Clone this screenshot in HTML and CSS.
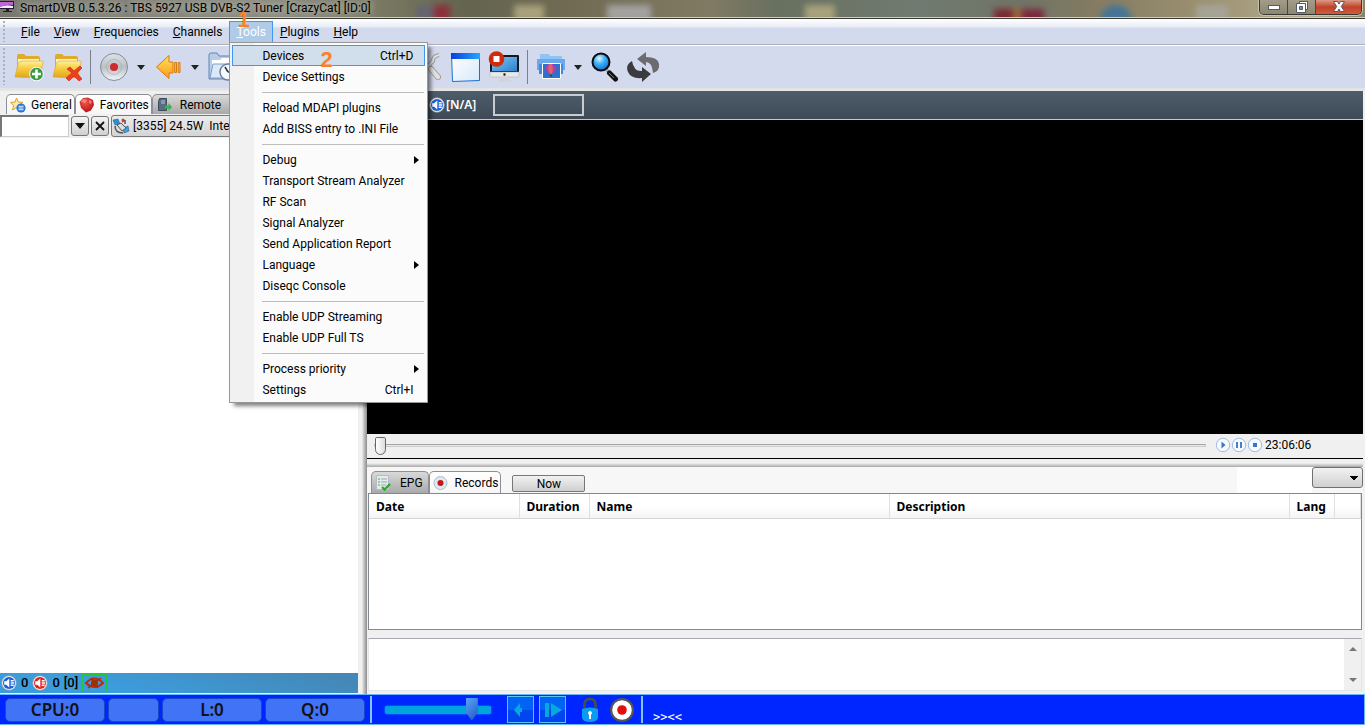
FILE: index.html
```html
<!DOCTYPE html>
<html lang="en">
<head>
<meta charset="utf-8">
<title>SmartDVB</title>
<link rel="stylesheet" href="styles.css">
</head>
<body>
<svg class="defs" width="0" height="0" aria-hidden="true">
  <defs>
    <linearGradient id="gold" x1="0" y1="0" x2="0" y2="1"><stop offset="0" stop-color="#fff0a0"/><stop offset=".4" stop-color="#f8cf45"/><stop offset="1" stop-color="#e2a21a"/></linearGradient>
    <linearGradient id="orange" x1="0" y1="0" x2="0" y2="1"><stop offset="0" stop-color="#ffe05a"/><stop offset="1" stop-color="#ff9a1c"/></linearGradient>
    <linearGradient id="silver" x1="0" y1="0" x2="0" y2="1"><stop offset="0" stop-color="#dfe3e6"/><stop offset=".5" stop-color="#b9c0c6"/><stop offset="1" stop-color="#f4f6f8"/></linearGradient>
    <linearGradient id="screen" x1="0" y1="0" x2="1" y2="1"><stop offset="0" stop-color="#7cc8f4"/><stop offset="1" stop-color="#2f7fcb"/></linearGradient>
    <linearGradient id="bluebar" x1="0" y1="0" x2="1" y2="0"><stop offset="0" stop-color="#0a3ce0"/><stop offset="1" stop-color="#1fa8ff"/></linearGradient>
    <linearGradient id="page" x1="0" y1="0" x2="1" y2="1"><stop offset="0" stop-color="#fff"/><stop offset="1" stop-color="#d8e8fb"/></linearGradient>
    <radialGradient id="lens" cx=".4" cy=".3" r=".8"><stop offset="0" stop-color="#e0f6ff"/><stop offset=".4" stop-color="#3eb1f5"/><stop offset="1" stop-color="#0560c8"/></radialGradient>
    <radialGradient id="red" cx=".4" cy=".3" r=".8"><stop offset="0" stop-color="#f0584e"/><stop offset="1" stop-color="#b00a10"/></radialGradient>
    <symbol id="folder" viewBox="0 0 30 30"><path d="M3 24V4q0-2 2-2h5l2 2h12q2 0 2 2v18z" fill="#e0ab2a"/><path d="M4 7h21v5H4z" fill="#fff3bd"/><path d="M1 25 4 12q1-3 4-3h20q2 0 1 2l-3 13q-1 2-3 2z" fill="url(#gold)" stroke="#d9a528" stroke-width=".6"/></symbol>
    <symbol id="speaker" viewBox="0 0 16 16"><circle cx="8" cy="8" r="7.300" fill="#f4f4f4" stroke="#999" stroke-width=".7"/><circle cx="8" cy="8" r="6" fill="currentColor"/><path d="M3.200 6.300h2L8.300 3.500v9L5.200 9.700h-2zM9.700 5h3v1.400h-3zM9.700 7.300h3.500v1.400H9.700zM9.700 9.600h3V11h-3z" fill="#fff"/></symbol>
  </defs>
</svg>

<div class="window">
  <header class="titlebar">
    <div class="backdrop" aria-hidden="true"><i class="b1"></i><i class="b2"></i><i class="b3"></i><i class="b4"></i><i class="b5"></i><i class="b6"></i><i class="b7"></i><i class="b8"></i></div>
    <svg class="app-icon" width="16" height="16" viewBox="0 0 16 16"><path d="M0 1h14v8H0z" fill="#241b38"/><path d="M0 2h13v3Q7 4 0 7z" fill="#c264dc"/><path d="M0 7q6-3 13-1v2H0z" fill="#eee"/><path d="M6 9h3v2h3v1H3v-1h3z" fill="#222"/></svg>
    <h1 class="title">SmartDVB 0.5.3.26 : TBS 5927 USB DVB-S2 Tuner [CrazyCat] [ID:0]</h1>
    <div class="window-buttons">
      <button class="wb" aria-label="Minimize"><svg width="14" height="14" viewBox="0 0 14 14"><rect x="1.500" y="5.500" width="11" height="4" fill="#fff" stroke="#555a68"/></svg></button>
      <button class="wb" aria-label="Restore"><svg width="14" height="14" viewBox="0 0 14 14"><path d="M4.500 1.500h8v8h-2v-6h-6z" fill="#fff" stroke="#555a68"/><path d="M1.500 3.500h9v9h-9zM4.500 6.500v3h3v-3z" fill="#fff" fill-rule="evenodd" stroke="#555a68"/></svg></button>
      <button class="wb wb-close" aria-label="Close"><svg width="14" height="14" viewBox="0 0 14 14"><path d="M1.500 1.500h4L7 4l1.500-2.500h4L9.300 6.500l3.200 5h-4L7 9l-1.500 2.500h-4l3.200-5z" fill="#fff" stroke="#555a68"/></svg></button>
    </div>
  </header>

  <nav class="menubar">
    <button class="mb"><u>F</u>ile</button>
    <button class="mb"><u>V</u>iew</button>
    <button class="mb"><u>F</u>requencies</button>
    <button class="mb"><u>C</u>hannels</button>
    <div class="mb-host">
      <button class="mb mb-open" aria-expanded="true"><u>T</u>ools</button>
      <span class="callout callout-one">1</span>
      <div class="menu" role="menu">
        <button class="mi mi-hot" role="menuitem"><span>Devices</span><span>Ctrl+D</span></button>
        <button class="mi" role="menuitem">Device Settings</button>
        <hr class="ms">
        <button class="mi" role="menuitem">Reload MDAPI plugins</button>
        <button class="mi" role="menuitem">Add BISS entry to .INI File</button>
        <hr class="ms">
        <button class="mi mi-sub" role="menuitem">Debug</button>
        <button class="mi" role="menuitem">Transport Stream Analyzer</button>
        <button class="mi" role="menuitem">RF Scan</button>
        <button class="mi" role="menuitem">Signal Analyzer</button>
        <button class="mi" role="menuitem">Send Application Report</button>
        <button class="mi mi-sub" role="menuitem">Language</button>
        <button class="mi" role="menuitem">Diseqc Console</button>
        <hr class="ms">
        <button class="mi" role="menuitem">Enable UDP Streaming</button>
        <button class="mi" role="menuitem">Enable UDP Full TS</button>
        <hr class="ms">
        <button class="mi mi-sub" role="menuitem">Process priority</button>
        <button class="mi" role="menuitem"><span>Settings</span><span>Ctrl+I</span></button>
        <span class="callout callout-two">2</span>
      </div>
    </div>
    <button class="mb"><u>P</u>lugins</button>
    <button class="mb"><u>H</u>elp</button>
  </nav>

  <div class="toolbar" role="toolbar">
    <button class="tb" aria-label="Add folder"><svg width="30" height="30" viewBox="0 0 30 30"><use href="#folder"/><circle cx="22.500" cy="22" r="6.800" fill="#3a9a43" stroke="#fff"/><path d="M22.500 17.500v9M18 22h9" stroke="#fff" stroke-width="2.600"/></svg></button>
    <button class="tb" aria-label="Delete folder"><svg width="30" height="30" viewBox="0 0 30 30"><use href="#folder"/><path d="M15 17l3-2 4 4 6-5 2 2-5 5 5 6-3 2-5-5-5 5-3-3 6-5z" fill="#ee3f22" stroke="#cf2c14" stroke-width=".7"/></svg></button>
    <span class="tsep"></span>
    <button class="tb" aria-label="Record"><svg width="30" height="30" viewBox="0 0 30 30"><circle cx="15" cy="15" r="13.500" fill="url(#silver)" stroke="#858c92"/><circle cx="15" cy="15" r="7.500" fill="none" stroke="#a4abb1" opacity=".6"/><circle cx="15" cy="15" r="4" fill="#d12c2c"/></svg></button>
    <button class="tb tb-drop" aria-label="Record options"><svg width="8" height="5" viewBox="0 0 8 5"><path d="M0 0h8L4 5z" fill="#222"/></svg></button>
    <button class="tb" aria-label="Back"><svg width="28" height="28" viewBox="0 0 28 28"><path d="M2.500 14 15 2.500V9h4v11h-4v5.500zM20.700 9.500h1.800v10h-1.800zM24.200 9.500H26v10h-1.800z" fill="url(#orange)" stroke="#d77a10"/></svg></button>
    <button class="tb tb-drop" aria-label="Back options"><svg width="8" height="5" viewBox="0 0 8 5"><path d="M0 0h8L4 5z" fill="#222"/></svg></button>
    <button class="tb" aria-label="Schedule"><svg width="30" height="30" viewBox="0 0 30 30"><path d="M2 27V3q0-2 2-2h6l2 3h14v23z" fill="#b7cde9" stroke="#6484b3"/><path d="M5 8h8l2-2h9v8H5z" fill="#fff"/><path d="M3 26 6 12h23l-3 14z" fill="#dce9f8" stroke="#7f9cc6"/><circle cx="21" cy="20" r="8" fill="#f5faff" stroke="#6c7f9b" stroke-width="1.500"/><path d="M21 20l-3-5M21 20h4" stroke="#24364f" stroke-width="1.500"/></svg></button>
    <span class="tgap"></span>
    <button class="tb" aria-label="Tools"><svg width="30" height="30" viewBox="0 0 30 30"><path d="M5 4 22 22M26 3q-6 1-6 6L8 22q-4 1-4 5" fill="none" stroke="#999" stroke-width="4"/><path d="M5 4 22 22M26 3q-6 1-6 6L8 22" fill="none" stroke="#e2e2e2" stroke-width="2.200"/><path d="M18 17l7 8" stroke="#999" stroke-width="6" stroke-linecap="round"/><path d="M18 17l7 8" stroke="#e0e0de" stroke-width="4.400" stroke-linecap="round"/></svg></button>
    <button class="tb" aria-label="Window"><svg width="32" height="32" viewBox="0 0 32 32"><path d="M1.500 2.500h28v27l-27 1z" fill="url(#page)" stroke="#1d6fd2"/><path d="M1 2h29v6H1z" fill="url(#bluebar)"/></svg></button>
    <button class="tb" aria-label="Stop display"><svg width="32" height="32" viewBox="0 0 32 32"><path d="M2 5q0-1 1-1h27q1 0 1 1v17H2z" fill="#161a20"/><path d="M4 6h25v14H4z" fill="url(#screen)"/><path d="M2 21h29v4q0 1-1 1H3q-1 0-1-1z" fill="#e6e8eb" stroke="#aaa" stroke-width=".5"/><circle cx="16.500" cy="23.500" r="1.200" fill="#222"/><path d="M13 26h7l1 3h2v2H10v-2h2z" fill="#d2d5d9"/><circle cx="8.500" cy="8" r="7.800" fill="#d22b0c"/><path d="M5.500 5h6v6h-6z" fill="#fff"/></svg></button>
    <span class="tsep"></span>
    <button class="tb" aria-label="Snapshot"><svg width="30" height="30" viewBox="0 0 30 30"><path d="M4 2h9l1 2h12v8H4z" fill="#8fc4f6"/><path d="M1 7h28v11H1z" fill="#6aa9ec"/><path d="M3 12h24v10H3z" fill="#4388db"/><path d="M6.500 11.500h18v15h-18z" fill="#2d70ce" stroke="#fff"/><path d="M9.500 16q0-4 5-4t6 4q0 3-4.500 6h-2q-4.500-3-4.500-6z" fill="#b040a8"/><path d="M13 12h3l1 5-1 5h-2l-2-5z" fill="#e2606a"/><path d="M14 22.500h2v2h-2z" fill="#443"/></svg></button>
    <button class="tb tb-drop" aria-label="Snapshot options"><svg width="8" height="5" viewBox="0 0 8 5"><path d="M0 0h8L4 5z" fill="#222"/></svg></button>
    <button class="tb" aria-label="Search"><svg width="30" height="30" viewBox="0 0 30 30"><path d="m16 17 3.500 4" stroke="#aaa" stroke-width="3"/><path d="m19.500 21 6 6" stroke="#111" stroke-width="5" stroke-linecap="round"/><path d="m19 21 5 5" stroke="#777"/><circle cx="11" cy="10" r="8.500" fill="url(#lens)" stroke="#0b0d10" stroke-width="2"/></svg></button>
    <button class="tb" aria-label="Refresh"><svg width="34" height="32" viewBox="0 0 34 32"><path d="M6 10Q-1 14 2 21t14 6v4l9-8-9-7v4Q8 21 6 10z" fill="#3b3b3f"/><path d="M27 22q7-2 6-9T20 6V1l-9 7 9 7v-4q6 0 7 11z" fill="#6b6b70"/></svg></button>
  </div>

  <div class="main">
    <aside class="left">
      <div class="tabs" role="tablist">
        <button class="tab tab-lit" role="tab"><svg width="16" height="16" viewBox="0 0 16 16"><path d="m6.500 1 1.800 4 4.500.4-3.300 3 1 4.400-4-2.300L2.600 13l1-4.600L.5 5.400 5 5z" fill="#fde9a6" stroke="#dda02c"/><circle cx="11" cy="11" r="4.600" fill="#2675d8"/><path d="M8.500 9.300h5M8.500 11h5M8.500 12.700h5" stroke="#fff" stroke-width=".9"/></svg>General</button>
        <button class="tab tab-lit" role="tab"><svg width="16" height="16" viewBox="0 0 16 16"><path d="m4 1 5-.5 5 2.500 1 5-3 5.500L7 15.500 2 11 .5 5z" fill="url(#red)"/><path d="m4 2 4 1-2 3-4-1zM10 3l3 1-1 3-2-1z" fill="#ff9990" opacity=".7"/></svg>Favorites</button>
        <button class="tab tab-on" role="tab" aria-selected="true"><svg width="16" height="16" viewBox="0 0 16 16"><path d="M2.500 1.500h7v12h-8v-9z" fill="#586d82" stroke="#3d4c5b"/><path d="M4 4h4M4 6h4" stroke="#b7c5d2"/><path d="M8 8.500h3.500V6L15 10l-3.500 4v-2.500H8z" fill="#35b44a"/></svg>Remote</button>
      </div>
      <div class="filter">
        <input class="filter-box" type="text" aria-label="Filter">
        <button class="sq" aria-label="Show list"><svg width="10" height="6" viewBox="0 0 10 6"><path d="M0 0h10L5 6z" fill="#111"/></svg></button>
        <button class="sq" aria-label="Clear"><svg width="10" height="10" viewBox="0 0 10 10"><path d="m1 1 8 8M9 1 1 9" stroke="#111" stroke-width="1.800"/></svg></button>
        <button class="sat"><svg width="18" height="18" viewBox="0 0 18 18"><path d="m1 3 5-1 2 5-5 1z" fill="#2e8ed2" stroke="#215f92" stroke-width=".6"/><path d="m11 11 5-2 1 5-5 2z" fill="#3aa0e0" stroke="#215f92" stroke-width=".6"/><path d="m5 8 4-2 5 5-4 3z" fill="#ddd" stroke="#555"/><path d="M3 9q0 7 8 7M10 5l3-2M13 3v4" fill="none" stroke="#555" stroke-width="1.500"/><circle cx="11" cy="3" r="1.500" fill="#d64036"/></svg>[3355] 24.5W&nbsp; Intelsat</button>
      </div>
      <div class="tree"></div>
      <div class="status">
        <svg class="ico-blue" width="16" height="16"><use href="#speaker"/></svg><span>0</span>
        <svg class="ico-red" width="16" height="16"><use href="#speaker"/></svg><span>0</span><span>[0]</span>
        <svg width="25" height="18" viewBox="0 0 25 18"><path d="M.5.500h24v17H.5z" stroke="#1ec43c" fill="none"/><path d="M4 9q8.500-9 17 0-8.500 8-17 0z" fill="none" stroke="#c92604" stroke-width="2"/><circle cx="12.500" cy="9" r="3.500" fill="#8e3a05"/><path d="m6 14 13-10M9 4l7 10" stroke="#a72a04" stroke-width="1.500"/></svg>
      </div>
    </aside>
    <div class="splitter"></div>
    <section class="right">
      <div class="info"><svg class="ico-blue" width="16" height="16"><use href="#speaker"/></svg><b>[N/A]</b><span class="info-box"></span></div>
      <div class="video"></div>
      <div class="seek">
        <input class="seek-range" type="range" min="0" max="100" value="0" aria-label="Position">
        <button class="rb" aria-label="Play"><svg width="16" height="16" viewBox="0 0 16 16"><circle cx="8" cy="8" r="6.700" fill="#f7faff" stroke="#9dbbe4"/><path d="m6.500 4.500 4 3.500-4 3.500z" fill="#3d75c2"/></svg></button>
        <button class="rb" aria-label="Pause"><svg width="16" height="16" viewBox="0 0 16 16"><circle cx="8" cy="8" r="6.700" fill="#f7faff" stroke="#9dbbe4"/><path d="M5 5h2v6H5zM9 5h2v6H9z" fill="#4b80c9"/></svg></button>
        <button class="rb" aria-label="Stop"><svg width="16" height="16" viewBox="0 0 16 16"><circle cx="8" cy="8" r="6.700" fill="#f7faff" stroke="#9dbbe4"/><path d="M6 6h4v4H6z" fill="#3d75c2"/></svg></button>
        <time class="clock">23:06:06</time>
      </div>
      <div class="hsplit"></div>
      <div class="epg-head">
        <div class="tabs" role="tablist">
          <button class="tab tab-on" role="tab" aria-selected="true"><svg width="16" height="16" viewBox="0 0 16 16"><path d="M1.500.5h12v14h-12z" fill="#e5eaef" stroke="#b4bcc4"/><path d="M3 4h2M3 7h2M3 10h2" stroke="#57a94c"/><path d="M6 4h6M6 7h6M6 10h5" stroke="#9aa7b4"/><path d="m7 12 2.500 2.500L15 9" fill="none" stroke="#31a836" stroke-width="2.400"/></svg>EPG</button>
          <button class="tab tab-lit" role="tab"><svg width="16" height="16" viewBox="0 0 16 16"><circle cx="7.500" cy="8" r="6.500" fill="#dce9f2" stroke="#aebdc8"/><circle cx="7.500" cy="8" r="3" fill="#c81414"/></svg>Records</button>
        </div>
        <button class="now">Now</button>
        <span class="blank"></span>
        <select class="drop" aria-label="Language"><option></option></select>
      </div>
      <div class="grid">
        <table class="epg">
          <thead><tr><th class="c-date">Date</th><th class="c-dur">Duration</th><th class="c-name">Name</th><th class="c-desc">Description</th><th class="c-lang">Lang</th><th></th></tr></thead>
        </table>
      </div>
      <div class="memo">
        <textarea class="memo-text" aria-label="Event details" readonly></textarea>
        <div class="scroll" aria-hidden="true"><svg width="8" height="4" viewBox="0 0 8 4"><path d="M0 4h8L4 0z" fill="#777"/></svg><svg width="8" height="4" viewBox="0 0 8 4"><path d="M0 0h8L4 4z" fill="#777"/></svg></div>
      </div>
    </section>
  </div>

  <footer class="bottom">
    <output class="pill">CPU:0</output><output class="pill pill-s"></output><output class="pill">L:0</output><output class="pill">Q:0</output>
    <span class="bsep"></span>
    <input class="volume" type="range" min="0" max="100" value="86" aria-label="Volume">
    <button class="bb" aria-label="Previous"><svg width="24" height="24" viewBox="0 0 24 24"><path d="M5 12l6-7v5h2v4h-2v5z" fill="#04a9de"/></svg></button>
    <button class="bb" aria-label="Next"><svg width="24" height="24" viewBox="0 0 24 24"><path d="M4 5h4v14H4zM10 5l11 7-11 7z" fill="#04a9de"/></svg></button>
    <button class="plain" aria-label="Lock"><svg width="18" height="26" viewBox="0 0 18 26"><path d="M3.500 13V8q0-6 5.500-6t5.500 6v5" fill="none" stroke="#4a5043" stroke-width="2.500"/><path d="M1 12q8-3 16 0v9q-1 4-8 4t-8-4z" fill="#0b9bf0"/><path d="M9 14a2 2 0 0 1 1 3.700V22H8v-4.300A2 2 0 0 1 9 14z" fill="#fff"/></svg></button>
    <button class="plain" aria-label="Record"><svg width="26" height="26" viewBox="0 0 26 26"><circle cx="13" cy="13" r="12" fill="#555"/><circle cx="13" cy="13" r="9.800" fill="#fff"/><circle cx="13" cy="13" r="4.800" fill="#e30d0d"/></svg></button>
    <span class="bsep"></span>
    <span class="arrows">&gt;&gt;&lt;&lt;</span>
  </footer>
</div>
</body>
</html>
```

FILE: styles.css
```css
* { box-sizing: border-box; }
body { margin: 0; font: 12px/16px Roboto, "Open Sans", sans-serif; color: #000; }
button, input, select, textarea { font: inherit; color: inherit; margin: 0; }
button { padding: 0; border: 0; background: none; white-space: nowrap; }
svg { display: block; flex: none; }
.defs { position: absolute; }
.window { display: flex; flex-direction: column; height: 100vh; min-height: 480px; overflow: hidden; background: #f0f0f0; }

/* title bar */
.titlebar { position: relative; display: flex; height: 19px; overflow: hidden; background: linear-gradient(90deg, #77776e 0, #8b8b80 20%, #76765f 29%, #64644f 34%, #716b54 42%, #807a63 52%, #68705f 57%, #707a70 67%, #707466 75%, #837b62 80%, #9b9070 88%, #b5ad90 96%, #8a826a 100%); border-bottom: 1px solid #3a3a33; }
.backdrop { position: absolute; inset: 0; filter: blur(3px); }
.backdrop i { position: absolute; top: 5px; width: 30px; height: 16px; background: #a9a27c; }
.backdrop .b1 { left: 416px; background: #666570; width: 22px; }
.backdrop .b2 { left: 434px; background: #8d2f38; width: 16px; }
.backdrop .b3 { left: 514px; }
.backdrop .b4 { left: 607px; width: 44px; background: #a3a3a1; }
.backdrop .b5 { left: 805px; }
.backdrop .b6 { left: 994px; width: 50px; top: 9px; background: linear-gradient(90deg, #7c2833 35%, #a68235 45%, #7c2840 60%); }
.backdrop .b7 { left: 1100px; width: 32px; background: #447497; border-radius: 16px 16px 0 0; }
.backdrop .b8 { left: 1196px; width: 32px; background: #a5a496; }
.titlebar::after { content: ""; position: absolute; left: 0; right: 0; bottom: 0; height: 1px; background: #cfcdc0; }
.app-icon { position: relative; }
.title { position: relative; margin: 0 auto 0 4px; font: inherit; font-size: 12px; white-space: nowrap; text-shadow: 0 0 6px #c5c5bc, 0 0 10px #b5b5ac; }
.window-buttons { position: relative; z-index: 1; display: flex; height: 15px; margin-right: 3px; border: 1px solid #3a3730; border-top: 0; border-radius: 0 0 5px 5px; overflow: hidden; box-shadow: 0 0 0 1px #c9c3ae; }
.wb { width: 28px; display: grid; place-items: center; background: linear-gradient(#a39d88, #8b8672); border-right: 1px solid #4a463c; }
.wb-close { width: 45px; border: 0; background: linear-gradient(#dd9a84, #c0432a 50%, #d25a38); }

/* menu bar */
.menubar { display: flex; align-items: flex-start; height: 27px; padding: 2px 0 0 14px; background: linear-gradient(#fff, #e8ecf6 8px, #d4daee 9px); border-bottom: 1px solid #fff; box-shadow: inset 0 -1px #aeb0b4; }
.menubar, .toolbar { position: relative; flex: none; }
.menubar::before, .toolbar::before { content: ""; position: absolute; left: 3px; top: 2px; bottom: 3px; width: 2px; background: repeating-linear-gradient(#a9b0c4 0 2px, transparent 2px 4px); }
.mb { height: 22px; padding: 0 6px; border: 1px solid transparent; line-height: 20px; }
.mb-host { position: relative; }
.mb-open { display: block; color: #fff; background: #afcbe7; border-color: #3f97f2; }
.callout { position: absolute; font: bold 22px/22px "Liberation Sans", sans-serif; color: #ff7f27; }
.callout-one { left: 8px; top: -12px; }
.callout-two { left: 90px; top: 6px; }
.menu { position: absolute; z-index: 5; left: 0; top: 21px; width: 199px; padding: 2px; border: 1px solid #979797; background: linear-gradient(90deg, #f1f1f1 24px, #fbfbfb 24px); box-shadow: 4px 4px 4px -1px rgba(0, 0, 0, .5); }
.mi { position: relative; display: flex; justify-content: space-between; width: 100%; height: 21px; padding: 0 11px 0 29px; border: 1px solid transparent; line-height: 21px; text-align: left; }
.mi-hot { background: #d1dfec; border-color: #3f97f2; }
.mi-sub::after { content: ""; align-self: center; margin-right: -6px; border: 4px solid transparent; border-left: 5px solid #000; border-right: 0; }
.ms { height: 1px; margin: 5px 1px 4px 30px; border: 0; background: #bdbdbd; }

/* toolbar */
.toolbar { display: flex; align-items: center; height: 45px; padding: 0 0 0 10px; background: #d4daee; border-bottom: 3px solid #b9b9b9; border-image: linear-gradient(#aaa, #e6e6e6) 3; }
.tb { display: grid; place-items: center; flex: none; width: 38px; height: 38px; }
.tb-drop { width: 16px; }
.tsep { flex: none; width: 1px; height: 34px; margin: 0 4px; background: #7b7f8c; }
.tgap { flex: none; width: 168px; }

/* panes */
.main { flex: 1; display: flex; min-height: 0; padding-right: 2px; }
.left { display: flex; flex-direction: column; width: 358px; flex: none; }
.tabs { display: flex; }
.tab { display: flex; align-items: center; height: 20px; padding: 0 4px; border: 1px solid #8e8f94; border-bottom: 0; border-radius: 5px 5px 0 0; }
.tab-lit { background: linear-gradient(#fff, #f6f6f8); }
.tab-on { background: linear-gradient(#d9d9d9, #a9a9ab); }
.left .tabs { padding: 3px 0 0 6px; }
.left .tab { gap: 5px; padding: 0 2px 0 3px; line-height: 18px; }
.left .tab-on { gap: 7px; width: 90px; padding-left: 4px; }
.filter { display: flex; gap: 2px; height: 24px; padding-top: 1px; }
.filter-box { width: 69px; height: 22px; border: 1px solid #ccc; border-top: 2px solid #777; border-left: 2px solid #777; background: #fff; }
.sq { display: grid; place-items: center; width: 18px; height: 20px; margin-top: 1px; border: 1px solid #777; border-radius: 3px; background: linear-gradient(#f4f4f4, #d0d0d0); }
.sat { display: flex; align-items: center; gap: 3px; flex: 1; height: 22px; padding-left: 0; border: 1px solid #777; border-radius: 3px; background: linear-gradient(#ececec, #d4d4d4); }
.tree { flex: 1; background: #fff; }
.status { display: flex; align-items: center; gap: 4px; height: 20px; margin-bottom: 1px; padding-left: 1px; background: linear-gradient(15deg, #3c9ddd 30%, #4488b7 90%); font: 500 13px/20px Roboto, sans-serif; }
.ico-blue { color: #1862dc; }
.ico-red { color: #dc2626; }
.splitter { width: 9px; flex: none; background: linear-gradient(90deg, #f0f0f0 4px, #d5d5d5 5px, #8c8c8c); }
.right { flex: 1; display: flex; flex-direction: column; min-width: 0; }
.info { display: flex; align-items: center; height: 29px; padding-left: 62px; background: linear-gradient(#4e5d6b, #3e4a56); border-bottom: 1px solid #c8c8c8; color: #fff; }
.info b { width: 48px; padding-left: 1px; font: 600 12px/16px "Noto Sans", sans-serif; }
.info-box { width: 91px; height: 22px; border: 2px solid #c9cccf; }
.video { flex: 1; background: #000; }
.seek { display: flex; align-items: center; flex: none; height: 25px; padding: 0 0 2px 7px; border-bottom: 1px solid #000; background: #f0f0f0; }
.seek-range { flex: 1; height: 20px; appearance: none; background: none; }
.seek-range::-webkit-slider-runnable-track { height: 3px; border: 1px solid #ccc; border-top-color: #a4a4a4; background: #e7eaea; }
.seek-range::-webkit-slider-thumb { appearance: none; width: 11px; height: 18px; margin-top: -8px; border: 1px solid #666; border-radius: 2px 2px 6px 6px; background: linear-gradient(90deg, #fff, #ddd); }
.rb { width: 16px; height: 16px; }
.rb:first-of-type { margin-left: 9px; }
.clock { width: 100px; padding-left: 2px; }
.hsplit { flex: none; height: 8px; background: linear-gradient(#f0f0f0 4px, #e0e0e0 5px, #a8a8a8); }
.epg-head { display: flex; align-items: flex-end; flex: none; height: 26px; padding-left: 4px; background: #f7f7f7; }
.epg-head .tab { gap: 6px; height: 22px; padding: 0 2px 0 3px; }
.epg-head .tab-on { gap: 9px; padding: 0 5px 0 3px; }
.now { width: 73px; height: 17px; margin: 0 0 1px 11px; border: 1px solid #777; border-radius: 2px; background: linear-gradient(#f2f2f2, #cfcfcf); line-height: 16px; }
.blank { width: 75px; height: 26px; margin-left: auto; background: #fff; }
.drop { appearance: none; align-self: flex-start; width: 51px; height: 21px; border: 1px solid #707070; border-radius: 3px; background: linear-gradient(to bottom right, #000 50%, transparent 51%) 41px 8px / 4px 4px no-repeat, linear-gradient(to bottom left, #000 50%, transparent 51%) 37px 8px / 4px 4px no-repeat, linear-gradient(#f2f2f2, #d0d0d0); }
.grid { flex: none; height: 137px; margin: 0 1px; border: 1px solid #828790; background: #fff; }
.epg { width: 100%; border-collapse: collapse; table-layout: fixed; }
.epg th { height: 24px; padding: 3px 7px 0; border-right: 1px solid #e0e0e2; border-bottom: 1px solid #d5d5d5; background: linear-gradient(#fff 50%, #f4f4f6); text-align: left; font: bold 12px/16px "Noto Sans", sans-serif; }
.c-date { width: 150px; }
.c-dur { width: 70px; }
.c-name { width: 300px; }
.c-desc { width: 400px; }
.c-lang { width: 45px; }
.memo { display: flex; flex: none; height: 53px; margin: 8px 1px 3px; border: 1px solid #e3e3e8; border-top-color: #a7a9b0; background: #fff; }
.memo-text { flex: 1; border: 0; resize: none; background: #fff; }
.scroll { display: flex; flex-direction: column; justify-content: space-between; align-items: center; width: 17px; padding: 8px 0; background: #f0f0f0; }

/* bottom bar */
.bottom { display: flex; align-items: center; flex: none; height: 31px; padding-left: 5px; background: #0026ff; border: 1px solid #67b7ff; border-left: 0; }
.pill { width: 100px; height: 24px; margin-right: 3px; border: 1px solid #1748ca; border-radius: 5px; background: #4073f6; text-align: center; font: 600 17px/22px "Noto Sans", sans-serif; color: #101018; }
.pill-s { width: 51px; }
.bsep { width: 2px; height: 27px; margin-left: 2px; background: #82c4ff; }
.volume { appearance: none; width: 106px; height: 24px; margin: 0 16px 0 13px; background: none; }
.volume::-webkit-slider-runnable-track { height: 8px; border-radius: 2px; background: #00a4dc; box-shadow: 0 0 2px #0aaee2; }
.volume::-webkit-slider-thumb { appearance: none; width: 12px; height: 23px; margin-top: -8px; background: linear-gradient(135deg, #5aa4f5, #1d56c8); clip-path: polygon(0 0, 100% 0, 100% 65%, 50% 100%, 0 65%); }
.bb { display: grid; place-items: center; width: 27px; height: 27px; margin-right: 5px; border: 1px solid #58c3f4; background: linear-gradient(#0063f4 50%, #0045f0 50%); }
.plain { margin-left: 10px; }
.arrows { margin: 15px 0 0 10px; font: 12px/12px "DejaVu Sans Mono", monospace; color: #fff; }
.plain + .bsep { margin-left: 6px; }
```
